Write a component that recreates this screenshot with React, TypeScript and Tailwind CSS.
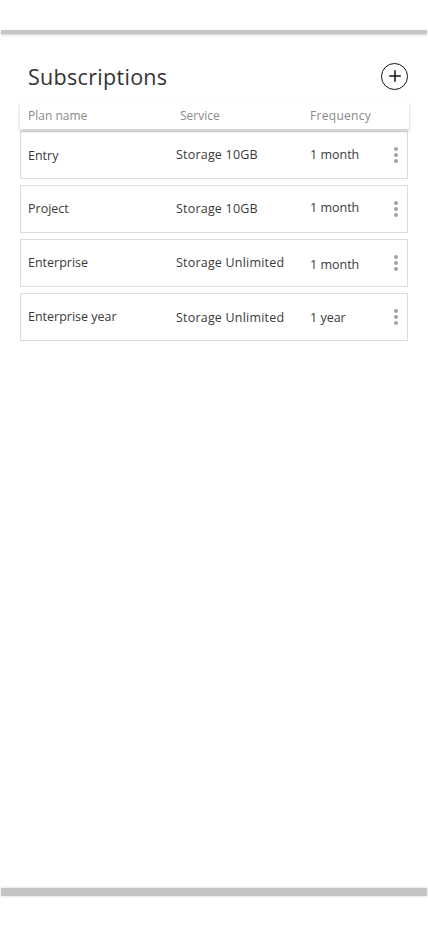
import { Plus } from "lucide-react";

const plans = [
  { name: "Entry", service: "Storage 10GB", freq: "1 month", sOff: "mt-[1px]", fOff: "", nOff: "mt-[2px]" },
  { name: "Project", service: "Storage 10GB", freq: "1 month", sOff: "", fOff: "-mt-[2px]", nOff: "" },
  { name: "Enterprise", service: "Storage Unlimited", freq: "1 month", sOff: "", fOff: "mt-[5px]", nOff: "" },
  { name: "Enterprise year", service: "Storage Unlimited", freq: "1 year", sOff: "mt-[3px]", fOff: "mt-[3px]", nOff: "" },
];

function Kebab() {
  return (
    <div className="flex flex-col items-center gap-[2px]">
      <span className="w-[4px] h-[4px] rounded-full bg-[#a3a3a3]" />
      <span className="w-[4px] h-[4px] rounded-full bg-[#a3a3a3]" />
      <span className="w-[4px] h-[4px] rounded-full bg-[#a3a3a3]" />
    </div>
  );
}

export default function App() {
  return (
    <div
      className="min-h-[927px] bg-white text-[#333]"
      style={{ fontFamily: "'Open Sans', 'Liberation Sans', sans-serif" }}
    >
      {/* top bar */}
      <div className="pt-[30px] px-[1px]">
        <div className="h-[4px] bg-[#c6c6c6] shadow-[0_1px_3px_rgba(0,0,0,0.2)]" />
      </div>

      {/* title */}
      <div className="flex items-center justify-between pl-[28px] pr-[20px] mt-[29px] h-[26px]">
        <h1 className="text-[21.5px] tracking-[0.3px] text-[#333] mt-[2px]">Subscriptions</h1>
        <button className="w-[27px] h-[27px] rounded-full border-[1.5px] border-[#111] flex items-center justify-center">
          <Plus size={18} strokeWidth={2} color="#111" />
        </button>
      </div>

      <div className="px-[20px] mt-[13px]">
        {/* header */}
        <div className="relative z-10 h-[27px] flex items-center text-[12px] text-[#8a8a8a] bg-white shadow-[0_2px_3px_rgba(0,0,0,0.22)] -mr-[1px]">
          <span className="pl-[8px] w-[160px]">Plan name</span>
          <span className="w-[130px]">Service</span>
          <span className="tracking-[0.3px]">Frequency</span>
        </div>

        {/* rows */}
        <div className="mt-[2px] flex flex-col gap-[6px]">
          {plans.map((p) => (
            <div
              key={p.name}
              className="h-[48px] border border-[#dcdcdc] flex items-center text-[12.5px] text-[#3a3a3a]"
            >
              <span className={`pl-[7px] w-[155px] ${p.nOff}`}>{p.name}</span>
              <span className={`w-[134px] tracking-[0.2px] ${p.sOff}`}>{p.service}</span>
              <span className={`w-[84px] ${p.fOff}`}>{p.freq}</span>
              <Kebab />
            </div>
          ))}
        </div>
      </div>

      {/* bottom bar */}
      <div className="mt-[547px] px-[1px]">
        <div className="h-[8px] bg-[#c4c4c4] shadow-[0_0_3px_rgba(0,0,0,0.2)]" />
      </div>
    </div>
  );
}
